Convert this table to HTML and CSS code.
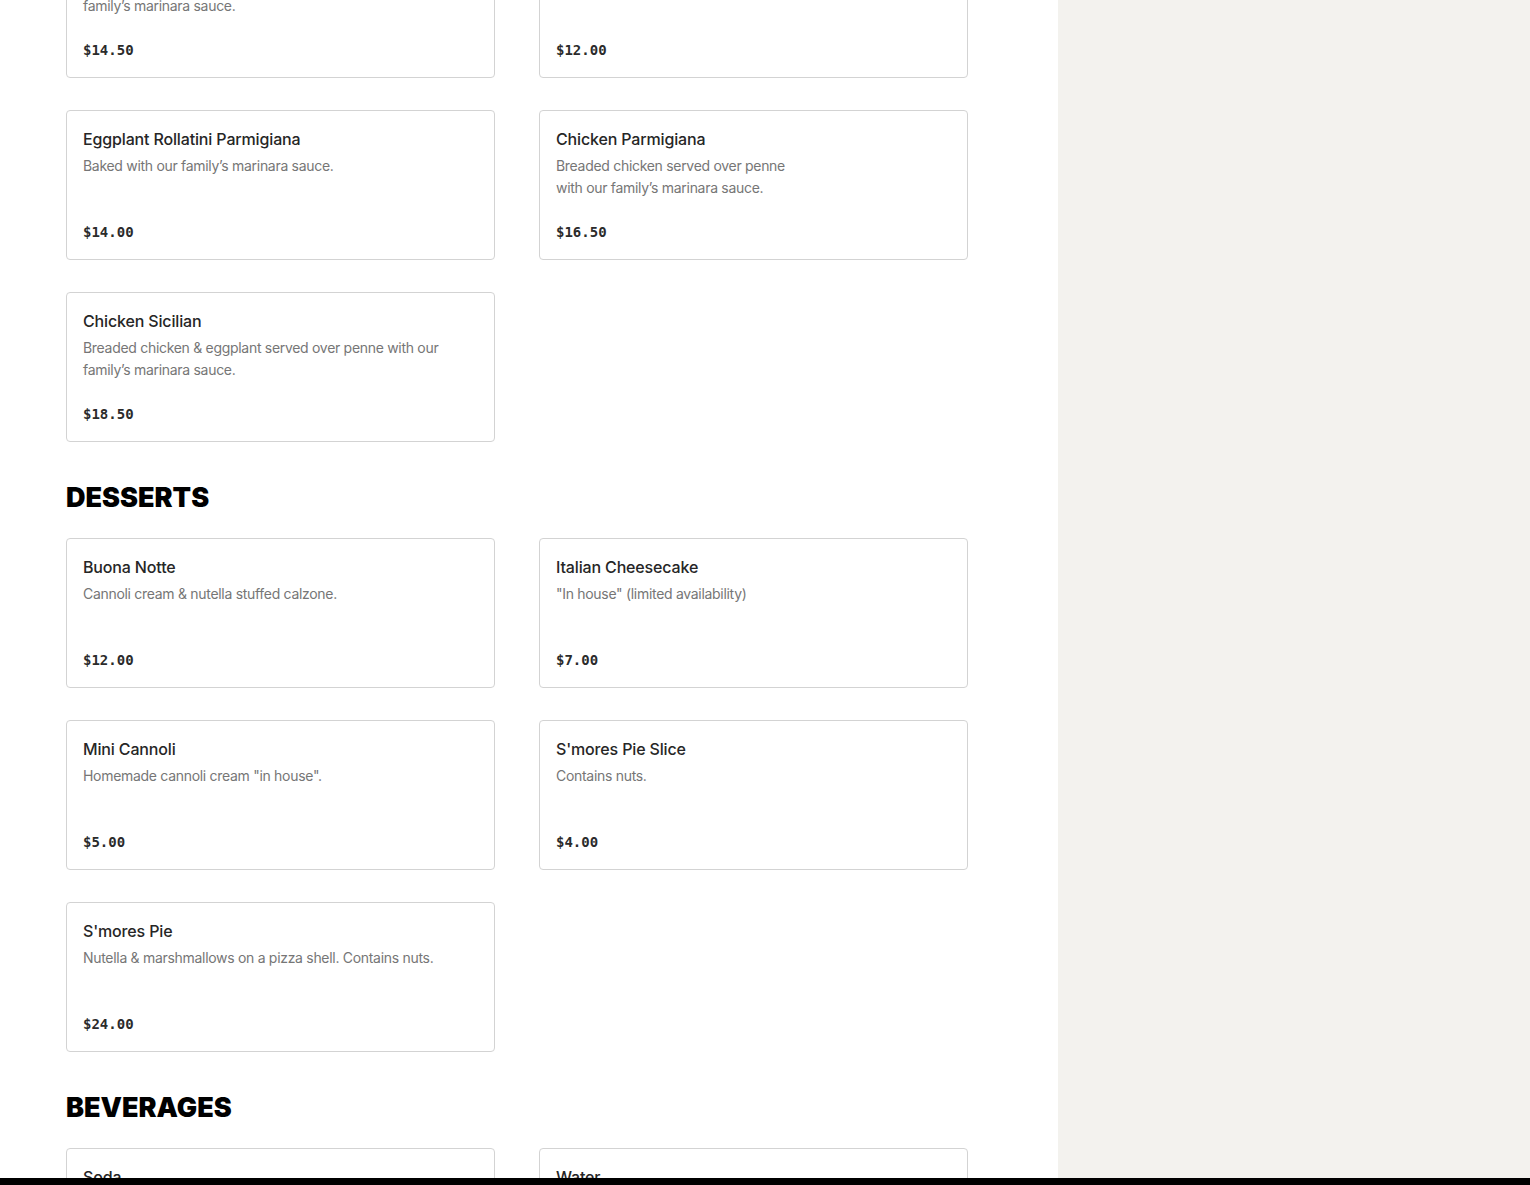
FILE: index.html
```html
<!DOCTYPE html>
<html lang="en">
<head>
<meta charset="utf-8">
<title>Menu</title>
<link rel="stylesheet" href="styles.css">
</head>
<body>
<div class="page">
  <main class="main">
    <section class="section section-first">
      <div class="grid">
        <div class="card">
          <div class="card-title">Eggplant Parmigiana</div>
          <div class="card-desc mid">Breaded eggplant served over penne with our family’s marinara sauce.</div>
          <div class="card-price">$14.50</div>
        </div>
        <div class="card">
          <div class="card-title">Baked Ziti</div>
          <div class="card-desc">With ricotta &amp; mozzarella.</div>
          <div class="card-price">$12.00</div>
        </div>
        <div class="card">
          <div class="card-title">Eggplant Rollatini Parmigiana</div>
          <div class="card-desc">Baked with our family’s marinara sauce.</div>
          <div class="card-price">$14.00</div>
        </div>
        <div class="card">
          <div class="card-title">Chicken Parmigiana</div>
          <div class="card-desc narrow">Breaded chicken served over penne with our family’s marinara sauce.</div>
          <div class="card-price">$16.50</div>
        </div>
        <div class="card">
          <div class="card-title">Chicken Sicilian</div>
          <div class="card-desc">Breaded chicken &amp; eggplant served over penne with our family’s marinara sauce.</div>
          <div class="card-price">$18.50</div>
        </div>
      </div>
    </section>

    <section class="section">
      <h2 class="section-title">DESSERTS</h2>
      <div class="grid">
        <div class="card">
          <div class="card-title">Buona Notte</div>
          <div class="card-desc">Cannoli cream &amp; nutella stuffed calzone.</div>
          <div class="card-price">$12.00</div>
        </div>
        <div class="card">
          <div class="card-title">Italian Cheesecake</div>
          <div class="card-desc">"In house" (limited availability)</div>
          <div class="card-price">$7.00</div>
        </div>
        <div class="card">
          <div class="card-title">Mini Cannoli</div>
          <div class="card-desc">Homemade cannoli cream "in house".</div>
          <div class="card-price">$5.00</div>
        </div>
        <div class="card">
          <div class="card-title">S'mores Pie Slice</div>
          <div class="card-desc">Contains nuts.</div>
          <div class="card-price">$4.00</div>
        </div>
        <div class="card">
          <div class="card-title">S'mores Pie</div>
          <div class="card-desc">Nutella &amp; marshmallows on a pizza shell. Contains nuts.</div>
          <div class="card-price">$24.00</div>
        </div>
      </div>
    </section>

    <section class="section">
      <h2 class="section-title">BEVERAGES</h2>
      <div class="grid">
        <div class="card">
          <div class="card-title">Soda</div>
          <div class="card-desc">Coke, Diet Coke, Sprite.</div>
          <div class="card-price">$2.50</div>
        </div>
        <div class="card">
          <div class="card-title">Water</div>
          <div class="card-desc">Bottled water.</div>
          <div class="card-price">$2.00</div>
        </div>
      </div>
    </section>
  </main>
  <aside class="sidebar"></aside>
</div>
<div class="bottom-bar"></div>
</body>
</html>
```

FILE: styles.css
```css
html, body {
  margin: 0;
  padding: 0;
  height: 100%;
  overflow: hidden;
  background: #ffffff;
}

body {
  font-family: "Inter", "Liberation Sans", sans-serif;
  color: #2b2b2b;
}

.page {
  display: flex;
  min-height: 100vh;
}

.main {
  width: 1058px;
  flex: none;
  box-sizing: border-box;
  padding: 0 90px 0 66px;
  background: #ffffff;
}

.sidebar {
  flex: 1;
  background: #f3f2ee;
  min-height: 100vh;
}

.section-first {
  margin-top: -72px;
}

.section-title {
  margin: 40px 0 24px;
  font-family: "Inter", "Liberation Sans", sans-serif;
  font-weight: 900;
  font-size: 27px;
  line-height: 32px;
  color: #000000;
}

.grid {
  display: grid;
  grid-template-columns: 429px 429px;
  column-gap: 44px;
  row-gap: 32px;
}

.card {
  box-sizing: border-box;
  height: 150px;
  border: 1px solid #d3d3d3;
  border-radius: 4px;
  padding: 16px 16px 17px;
  display: flex;
  flex-direction: column;
  background: #ffffff;
}

.card-title {
  font-size: 16px;
  line-height: 24px;
  font-weight: 500;
  letter-spacing: -0.15px;
  color: #262626;
}

.card-desc {
  margin-top: 4px;
  font-size: 14px;
  line-height: 22px;
  letter-spacing: -0.3px;
  color: #767676;
  flex: 1;
  max-width: 360px;
}

.card-desc.mid {
  max-width: 320px;
}

.card-desc.narrow {
  max-width: 240px;
}

.card-price {
  font-family: "DejaVu Sans Mono", "Liberation Mono", monospace;
  font-weight: bold;
  font-size: 14px;
  line-height: 20px;
  color: #2b2b2b;
}

.bottom-bar {
  position: fixed;
  left: 0;
  right: 0;
  bottom: 0;
  height: 7px;
  background: #000000;
}
```
